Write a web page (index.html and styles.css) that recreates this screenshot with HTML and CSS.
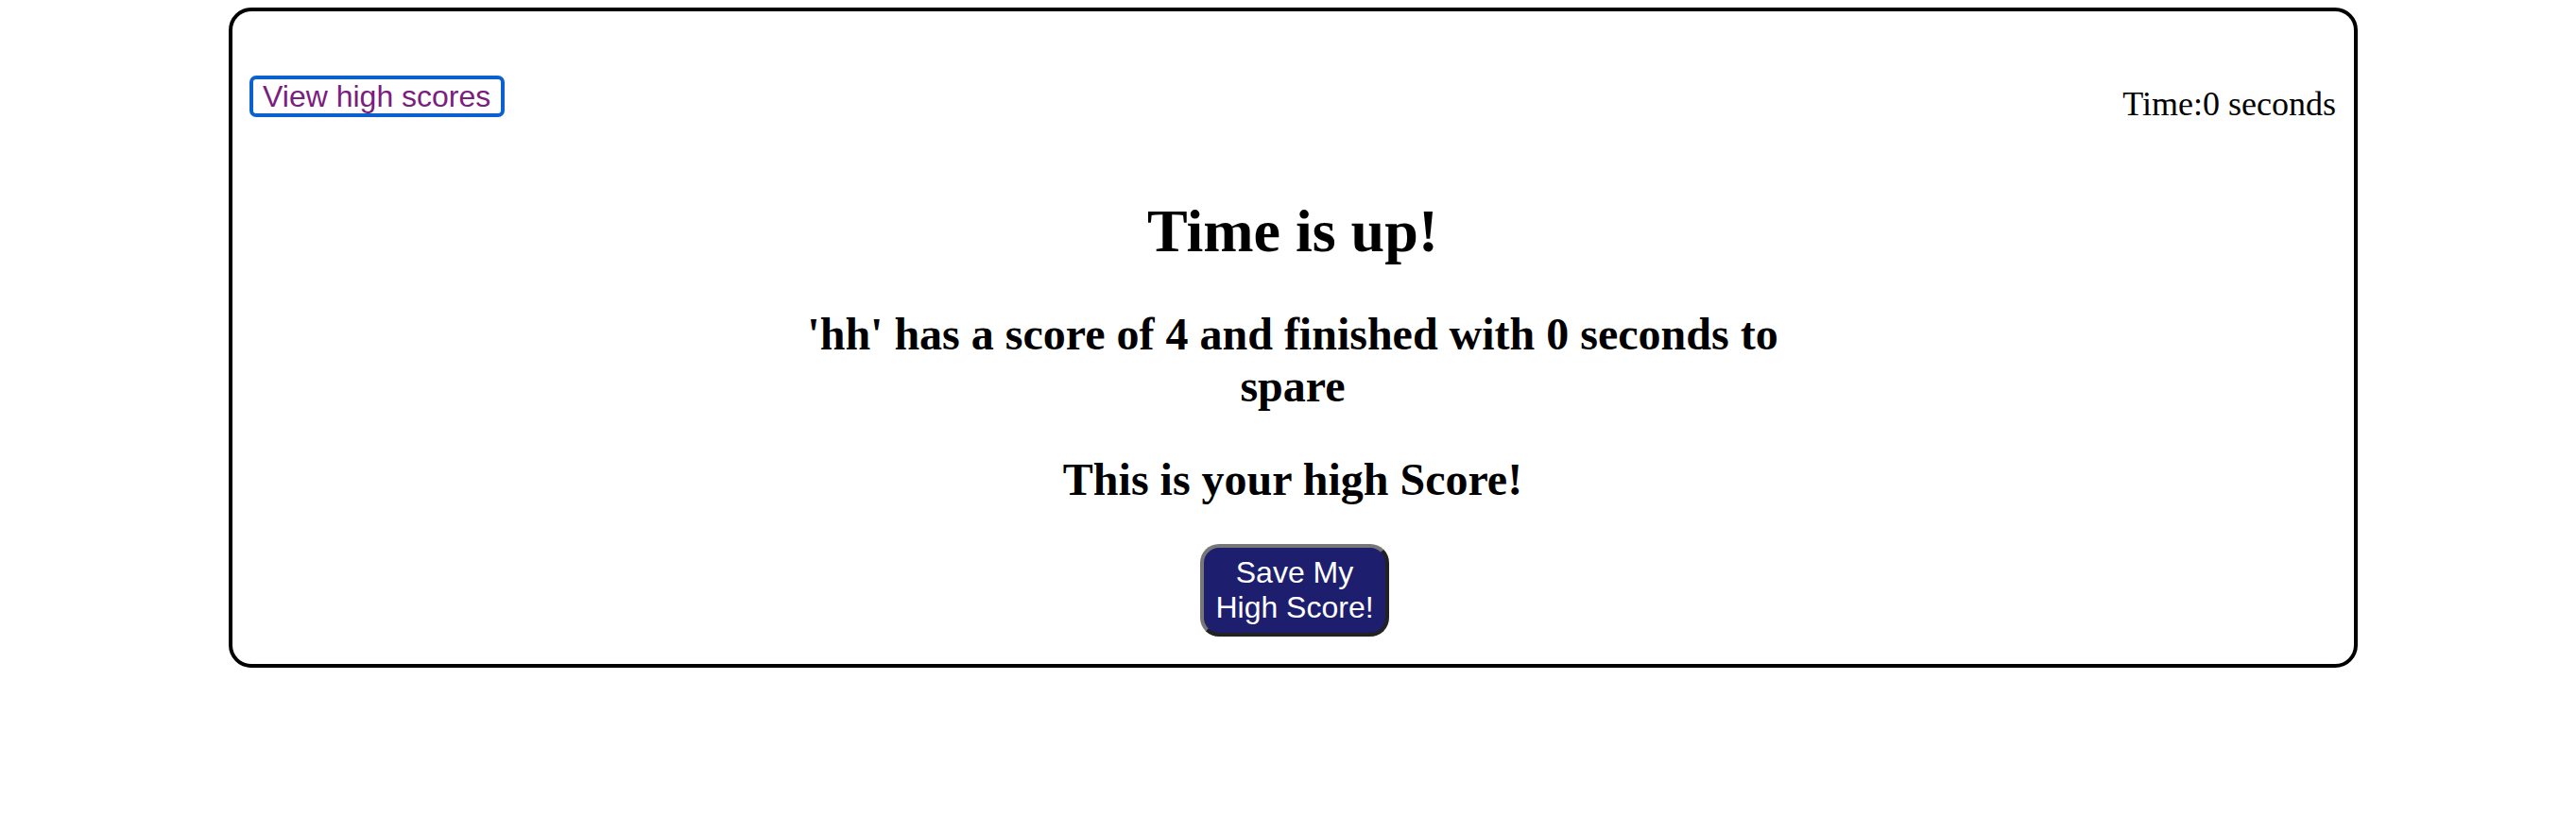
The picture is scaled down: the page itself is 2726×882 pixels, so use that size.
FILE: index.html
```html
<!DOCTYPE html>
<html lang="en">
<head>
<meta charset="utf-8">
<title>Quiz - Time is up</title>
<link rel="stylesheet" href="styles.css">
</head>
<body>
  <main class="card">
    <header class="topbar">
      <button class="scores-link" type="button">View high scores</button>
      <div class="timer">Time:0 seconds</div>
    </header>
    <section class="result">
      <h1 class="result-title">Time is up!</h1>
      <h2 class="result-line">'hh' has a score of 4 and finished with 0 seconds to spare</h2>
      <h2 class="result-line result-line--high">This is your high Score!</h2>
      <button class="save-btn" type="button">Save My High Score!</button>
    </section>
  </main>
</body>
</html>
```

FILE: styles.css
```css
html, body {
  margin: 0;
  padding: 0;
  background: #ffffff;
}

body {
  font-family: "Liberation Serif", "Times New Roman", serif;
  color: #000000;
}

.card {
  box-sizing: border-box;
  width: 2253px;
  height: 699px;
  margin: 8px 0 0 242px;
  border: 4px solid #000000;
  border-radius: 24px;
  padding: 68px 19px 28px 18px;
  display: flex;
  flex-direction: column;
}

.topbar {
  display: flex;
  justify-content: space-between;
  align-items: flex-start;
  height: 48px;
}

.scores-link {
  font-family: "Liberation Sans", Arial, sans-serif;
  font-size: 32px;
  line-height: 36px;
  color: #7b1d7e;
  background: #ffffff;
  border: 4px solid #0b62cf;
  border-radius: 7px;
  padding: 0 11px 0 10px;
  margin: 0;
  cursor: pointer;
}

.timer {
  margin-top: 10px;
  font-size: 36px;
  line-height: 40px;
}

.result {
  display: flex;
  flex-direction: column;
  align-items: center;
  text-align: center;
  max-width: 1090px;
  margin: 0 auto;
}

.result-title {
  margin: 80px 0 0;
  font-size: 64px;
  line-height: 74px;
  font-weight: bold;
}

.result-line {
  margin: 44px 0 0;
  font-size: 48px;
  line-height: 55px;
  font-weight: bold;
}

.result-line--high {
  margin-top: 44px;
}

.save-btn {
  box-sizing: border-box;
  width: 200px;
  margin: 41px 0 0 4px;
  padding: 8px 12px;
  font-family: "Liberation Sans", Arial, sans-serif;
  font-size: 32px;
  line-height: 37px;
  color: #ffffff;
  background: #1e1e6f;
  border: 4px solid;
  border-color: #777777 #222222 #222222 #777777;
  border-radius: 20px;
  cursor: pointer;
}
```
